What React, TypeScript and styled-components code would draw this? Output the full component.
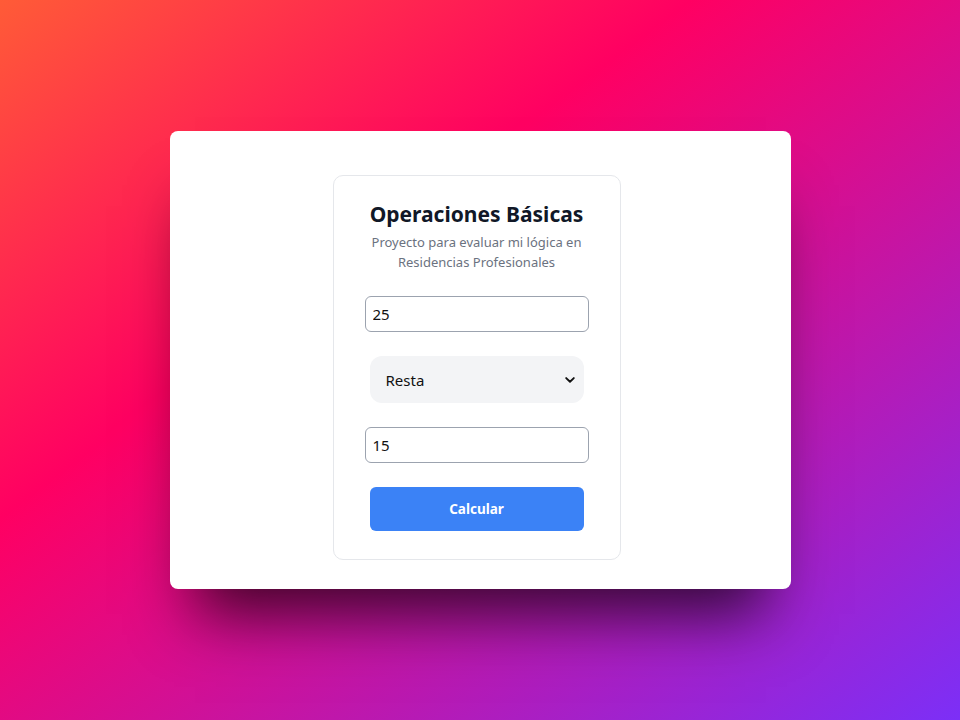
import styled, { createGlobalStyle } from "styled-components";

const GlobalStyle = createGlobalStyle`
  html, body {
    margin: 0;
    padding: 0;
  }
  body {
    font-family: "Noto Sans", "Open Sans", sans-serif;
  }
  * {
    box-sizing: border-box;
  }
`;

export default function App() {
  return (
    <>
      <GlobalStyle />
      <Page>
        <Sheet>
          <Card>
            <Title>Operaciones Básicas</Title>
            <Subtitle>
              Proyecto para evaluar mi lógica en Residencias Profesionales
            </Subtitle>
            <Form onSubmit={(e) => e.preventDefault()}>
              <NumberInput type="text" defaultValue="25" />
              <SelectWrap>
                <Select defaultValue="resta">
                  <option value="suma">Suma</option>
                  <option value="resta">Resta</option>
                  <option value="multiplicacion">Multiplicación</option>
                  <option value="division">División</option>
                </Select>
                <Chevron viewBox="0 0 10 6" aria-hidden>
                  <path
                    d="M1.2 1.1 L5 4.7 L8.8 1.1"
                    fill="none"
                    stroke="#111"
                    strokeWidth="1.9"
                    strokeLinecap="round"
                    strokeLinejoin="round"
                  />
                </Chevron>
              </SelectWrap>
              <NumberInput type="text" defaultValue="15" />
              <Button type="submit">Calcular</Button>
            </Form>
          </Card>
        </Sheet>
      </Page>
    </>
  );
}

const Page = styled.div`
  width: 100%;
  height: 720px;
  display: flex;
  align-items: center;
  justify-content: center;
  background: linear-gradient(
    to bottom right,
    #ff5b37 0%,
    #ff0062 36%,
    #7c2ff7 100%
  );
`;

const Sheet = styled.div`
  width: 621px;
  height: 458px;
  padding: 44px 170px 29px 163px;
  background: #ffffff;
  border-radius: 8px;
  box-shadow: 0 50px 60px -25px rgba(0, 0, 0, 0.72);
`;

const Card = styled.div`
  width: 288px;
  padding: 24px 36px 28px;
  border: 1px solid #e5e7eb;
  border-radius: 10px;
  display: flex;
  flex-direction: column;
  align-items: center;
`;

const Title = styled.h1`
  margin: 0;
  font-size: 21px;
  line-height: 28px;
  font-weight: 700;
  color: #111827;
  text-align: center;
  white-space: nowrap;
`;

const Subtitle = styled.p`
  margin: 4px 0 0;
  font-size: 13px;
  line-height: 20px;
  color: #6b7280;
  text-align: center;
`;

const Form = styled.form`
  width: 100%;
  margin-top: 24px;
  display: flex;
  flex-direction: column;
  align-items: center;
  gap: 24px;
`;

const NumberInput = styled.input`
  width: 224px;
  height: 36px;
  padding: 0 7px;
  border: 1px solid #9ca3af;
  border-radius: 6px;
  font-family: "Noto Sans", sans-serif;
  font-size: 15px;
  color: #111;
  background: #fff;
  outline: none;
`;

const SelectWrap = styled.div`
  position: relative;
  width: 214px;
`;

const Select = styled.select`
  width: 100%;
  height: 47px;
  padding: 0 28px 0 16px;
  appearance: none;
  border: none;
  border-radius: 12px;
  background: #f3f4f6;
  font-family: "Noto Sans", sans-serif;
  font-size: 15px;
  color: #111;
  outline: none;
`;

const Chevron = styled.svg`
  position: absolute;
  right: 9px;
  top: 21px;
  width: 10px;
  height: 6px;
  pointer-events: none;
`;

const Button = styled.button`
  width: 214px;
  height: 44px;
  border: none;
  border-radius: 6px;
  background: #3b82f6;
  color: #ffffff;
  font-family: "Noto Sans", sans-serif;
  font-size: 13.5px;
  font-weight: 700;
  cursor: pointer;
`;
